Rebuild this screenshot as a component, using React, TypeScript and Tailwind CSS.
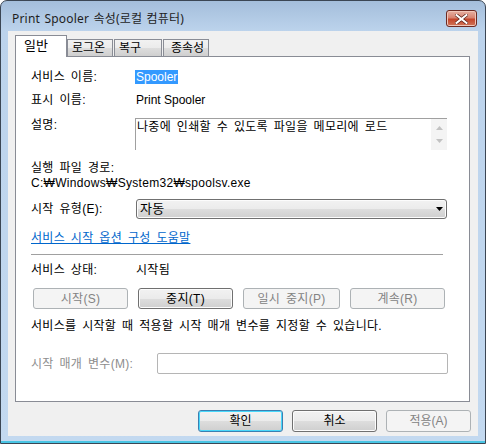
const FONT = { fontFamily: '"Liberation Sans", "Noto Sans CJK KR", sans-serif' };

const WinButton = ({
  label,
  disabled,
  primary,
  className = "",
}: {
  label: string;
  disabled?: boolean;
  primary?: boolean;
  className?: string;
}) => {
  if (disabled) {
    return (
      <div
        className={`flex items-center justify-center rounded-[3px] border border-[#adb2b5] bg-[#f4f4f4] text-[12px] text-[#838383] ${className}`}
      >
        {label}
      </div>
    );
  }
  return (
    <div
      className={`flex items-center justify-center rounded-[3px] border text-[12px] text-black ${
        primary
          ? "border-[#3c7fb1] shadow-[inset_0_0_0_1px_#48d8fb]"
          : "border-[#707070] shadow-[inset_0_0_0_1px_#fcfcfc]"
      } bg-[linear-gradient(to_bottom,#f2f2f2_0%,#ebebeb_50%,#dddddd_51%,#cfcfcf_100%)] ${className}`}
    >
      {label}
    </div>
  );
};

const Tab = ({ label, active, className = "" }: { label: string; active?: boolean; className?: string }) => {
  if (active) {
    return (
      <div
        className={`relative z-10 flex h-[22px] items-start border border-b-0 border-[#898c95] bg-white pl-[8px] pt-[2px] text-[13px] leading-[16px] text-black ${className}`}
      >
        {label}
      </div>
    );
  }
  return (
    <div
      className={`flex h-[18px] items-start border border-[#898c95] bg-[linear-gradient(to_bottom,#f2f2f2_0%,#ebebeb_50%,#dddddd_51%,#cfcfcf_100%)] pl-[4px] text-[12px] leading-[16px] text-black ${className}`}
    >
      {label}
    </div>
  );
};

export default function App() {
  return (
    <div
      style={FONT}
      className="flex h-[444px] w-[486px] flex-col overflow-hidden rounded-t-[7px] border border-[#3b4654] bg-[linear-gradient(to_bottom,#a4bedb_0px,#bcd3ec_30px,#c3d9f0_100%)]"
    >
      {/* title bar */}
      <div className="flex h-[30px] shrink-0 items-start justify-between">
        <div
          className="pl-[11px] pt-[10px] text-[12px] leading-[16px] tracking-[0.2px] text-[#1e1e1e] [word-spacing:1px]"
          style={{ fontFamily: '"Noto Sans", "Noto Sans CJK KR", sans-serif' }}
        >
          Print Spooler 속성(로컬 컴퓨터)
        </div>
        <div className="mr-[8px] mt-[9px] flex h-[17px] w-[31px] items-center justify-center rounded-[3px] border border-[#6d2a22] bg-[linear-gradient(to_bottom,#e7b1a3_0%,#d88370_45%,#c4452b_55%,#d0765a_100%)] shadow-[inset_0_0_0_1px_#f0c5b8]">
          <svg width="13" height="10" viewBox="0 0 13 10">
            <path d="M1.5 1 L11.5 9 M11.5 1 L1.5 9" stroke="#5a2018" strokeWidth="3.4" strokeLinecap="square" />
            <path d="M1.5 1 L11.5 9 M11.5 1 L1.5 9" stroke="#ffffff" strokeWidth="2" strokeLinecap="square" />
          </svg>
        </div>
      </div>

      {/* client area */}
      <div className="ml-[7px] flex h-[405px] w-[470px] shrink-0 flex-col bg-[#f0f0f0]">
        <div className="-mb-px flex h-[26px] items-end pl-[7px]">
          <Tab label="일반" active className="w-[52px]" />
          <Tab label="로그온" className="w-[46px]" />
          <Tab label="복구" className="ml-px w-[48px]" />
          <Tab label="종속성" className="ml-px w-[46px] pl-[7px]" />
        </div>

        <div className="ml-[7px] flex h-[346px] w-[455px] flex-col border border-[#898c95] bg-white pl-[15px] text-[12px] leading-[14px] tracking-[0.3px] text-black [word-spacing:2.2px]">
          <div className="mt-[13px] flex">
            <div className="w-[105px]">서비스 이름:</div>
            <div className="-ml-px bg-[#3399ff] px-px tracking-normal text-white">Spooler</div>
          </div>
          <div className="mt-[9px] flex">
            <div className="w-[105px]">표시 이름:</div>
            <div className="tracking-normal [word-spacing:normal]">Print Spooler</div>
          </div>
          <div className="mt-[9px] flex items-start">
            <div className="w-[104px] pt-[2px]">설명:</div>
            <div className="mt-[2px] flex h-[32px] w-[312px] border-l border-t border-[#a0a0a0]">
              <div className="flex-1 pl-[1px] pt-[1px]">나중에 인쇄할 수 있도록 파일을 메모리에 로드</div>
              <div className="flex w-[16px] flex-col items-center justify-center gap-[9px] bg-[#f4f4f4]">
                <svg width="7" height="4" viewBox="0 0 7 4">
                  <path d="M0 4 L3.5 0 L7 4 Z" fill="#c2c2c2" />
                </svg>
                <svg width="7" height="4" viewBox="0 0 7 4">
                  <path d="M0 0 L7 0 L3.5 4 Z" fill="#c2c2c2" />
                </svg>
              </div>
            </div>
          </div>
          <div className="mt-[11px]">실행 파일 경로:</div>
          <div className="mt-px">C:₩Windows₩System32₩spoolsv.exe</div>
          <div className="mt-[9px] flex items-center">
            <div className="w-[105px]">시작 유형(E):</div>
            <div className="flex h-[20px] w-[311px] items-center justify-between rounded-[3px] border border-[#707070] bg-[linear-gradient(to_bottom,#f2f2f2_0%,#ebebeb_50%,#dddddd_51%,#cfcfcf_100%)] pl-[3px] pr-[3px] shadow-[inset_0_0_0_1px_#fcfcfc]">
              <span className="text-[13px]">자동</span>
              <svg width="7" height="4" viewBox="0 0 7 4">
                <path d="M0 0 L7 0 L3.5 4 Z" fill="#000000" />
              </svg>
            </div>
          </div>
          <div className="mt-[12px] text-[#0066cc] underline">서비스 시작 옵션 구성 도움말</div>
          <div className="mt-[9px] h-px w-[412px] bg-[#a0a0a0]" />
          <div className="mt-[8px] flex">
            <div className="w-[105px]">서비스 상태:</div>
            <div>시작됨</div>
          </div>
          <div className="mt-[11px] flex w-[414px] justify-between pl-[2px]">
            <WinButton label="시작(S)" disabled className="h-[21px] w-[95px]" />
            <WinButton label="중지(T)" className="h-[21px] w-[95px]" />
            <WinButton label="일시 중지(P)" disabled className="h-[21px] w-[97px]" />
            <WinButton label="계속(R)" disabled className="h-[21px] w-[95px]" />
          </div>
          <div className="mt-[10px]">서비스를 시작할 때 적용할 시작 매개 변수를 지정할 수 있습니다.</div>
          <div className="mt-[20px] flex items-center">
            <div className="w-[126px] text-[#8d8d8d]">시작 매개 변수(M):</div>
            <div className="h-[21px] w-[291px] rounded-[2px] border border-[#b5b5b5] bg-white" />
          </div>
        </div>

        <div className="mt-[8px] flex justify-end gap-[9px] pr-[7px]">
          <WinButton label="확인" primary className="h-[22px] w-[85px]" />
          <WinButton label="취소" className="h-[22px] w-[85px]" />
          <WinButton label="적용(A)" disabled className="h-[22px] w-[85px]" />
        </div>
      </div>
      <div className="flex-1" />
      <div className="h-[2px] bg-[#49c5e4]" />
    </div>
  );
}
